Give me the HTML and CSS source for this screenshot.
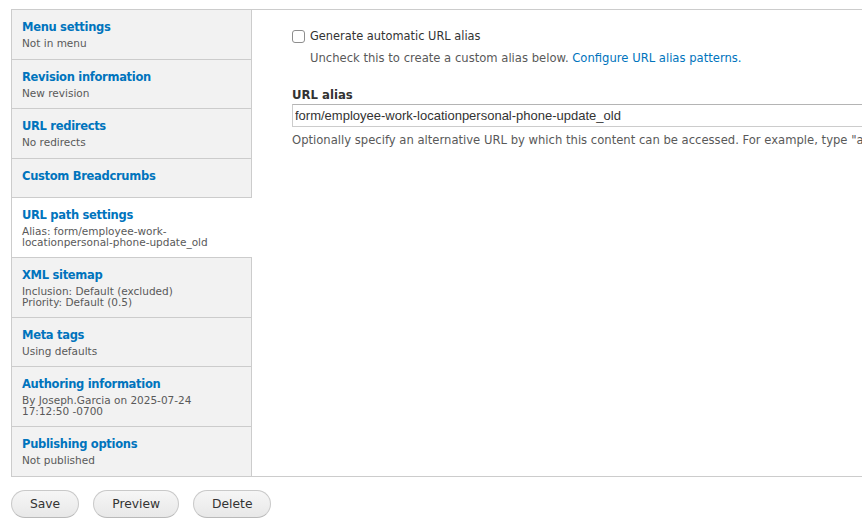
FILE: index.html
```html
<!DOCTYPE html>
<html lang="en">
<head>
<meta charset="utf-8">
<title>Edit</title>
<link rel="stylesheet" href="styles.css">
</head>
<body>
<div class="page">
  <div class="vtabs">
    <ul class="vt-menu">
      <li class="vt-item"><a class="vt-link" href="#"><strong class="vt-title">Menu settings</strong><span class="vt-summary">Not in menu</span></a></li>
      <li class="vt-item"><a class="vt-link" href="#"><strong class="vt-title">Revision information</strong><span class="vt-summary">New revision</span></a></li>
      <li class="vt-item"><a class="vt-link" href="#"><strong class="vt-title">URL redirects</strong><span class="vt-summary">No redirects</span></a></li>
      <li class="vt-item"><a class="vt-link vt-link-plain" href="#"><strong class="vt-title">Custom Breadcrumbs</strong></a></li>
      <li class="vt-item is-selected"><a class="vt-link vt-link-two" href="#"><strong class="vt-title">URL path settings</strong><span class="vt-summary">Alias: form/employee-work-<br>locationpersonal-phone-update_old</span></a></li>
      <li class="vt-item"><a class="vt-link vt-link-two" href="#"><strong class="vt-title">XML sitemap</strong><span class="vt-summary">Inclusion: Default (excluded)<br>Priority: Default (0.5)</span></a></li>
      <li class="vt-item"><a class="vt-link" href="#"><strong class="vt-title">Meta tags</strong><span class="vt-summary">Using defaults</span></a></li>
      <li class="vt-item"><a class="vt-link vt-link-two" href="#"><strong class="vt-title">Authoring information</strong><span class="vt-summary">By Joseph.Garcia on 2025-07-24<br>17:12:50 -0700</span></a></li>
      <li class="vt-item"><a class="vt-link" href="#"><strong class="vt-title">Publishing options</strong><span class="vt-summary">Not published</span></a></li>
    </ul>
    <div class="vt-pane">
      <div class="form-item form-checkbox">
        <label class="cb-label"><span class="cb"></span>Generate automatic URL alias</label>
        <div class="desc desc-indented">Uncheck this to create a custom alias below. <a class="link" href="#">Configure URL alias patterns.</a></div>
      </div>
      <div class="form-item form-text">
        <label class="field-label">URL alias</label>
        <input class="text-input" type="text" value="form/employee-work-locationpersonal-phone-update_old">
        <div class="desc desc-after">Optionally specify an alternative URL by which this content can be accessed. For example, type "about" when writing an about page.</div>
      </div>
    </div>
  </div>
  <div class="actions">
    <button class="btn" type="button">Save</button>
    <button class="btn" type="button">Preview</button>
    <button class="btn" type="button">Delete</button>
  </div>
</div>
</body>
</html>
```

FILE: styles.css
```css
html {
  overflow: hidden;
  background: #fff;
}
body {
  margin: 0;
  padding: 9px 0 0 11px;
  font-family: "DejaVu Sans", Verdana, sans-serif;
  color: #333;
}
.page {
  width: 1100px;
}
.vtabs {
  display: flex;
  border: 1px solid #ccc;
  border-right: none;
}
.vt-menu {
  list-style: none;
  margin: 0;
  padding: 0;
  width: 240px;
  flex: none;
  box-sizing: border-box;
  border-right: 1px solid #ccc;
  background: #f2f2f2;
}
.vt-item {
  border-bottom: 1px solid #ccc;
  background: #f2f2f2;
}
.vt-item:last-child {
  border-bottom: none;
}
.vt-item.is-selected {
  background: #fff;
  margin-right: -1px;
  position: relative;
}
.vt-link {
  display: block;
  padding: 8px 10px 9.6px 10px;
  text-decoration: none;
}
.vt-link-plain {
  padding-bottom: 12px;
}
.vt-link-two {
  padding-bottom: 9px;
}
.vt-title {
  display: block;
  font-size: 11.5px;
  letter-spacing: -0.3px;
  line-height: 18px;
  font-weight: bold;
  color: #0074bd;
}
.vt-summary {
  display: block;
  margin-top: 2px;
  font-size: 10.5px;
  line-height: 11px;
  color: #595959;
  white-space: nowrap;
}
.vt-pane {
  flex: 1;
  padding: 17px 0 0 40px;
}
.form-item {
  white-space: nowrap;
}
.cb-label {
  display: flex;
  align-items: center;
  font-size: 11.4px;
  line-height: 18px;
  color: #333;
}
.cb {
  width: 13px;
  height: 13px;
  box-sizing: border-box;
  border: 1px solid #8e8e8e;
  border-radius: 3px;
  background: #fff;
  margin-right: 5px;
  flex: none;
}
.desc {
  font-size: 11.6px;
  line-height: 18px;
  color: #595959;
}
.desc-indented {
  margin: 4px 0 0 18px;
}
.link {
  color: #0074bd;
  text-decoration: none;
}
.form-text {
  margin-top: 19px;
}
.field-label {
  display: block;
  font-size: 11.7px;
  line-height: 18px;
  font-weight: bold;
  color: #333;
}
.text-input {
  display: block;
  margin-top: 0;
  width: 720px;
  height: 23px;
  box-sizing: border-box;
  padding: 0 2px;
  border: 1px solid #ccc;
  border-top-color: #b4b4b4;
  border-radius: 0;
  font-family: "Liberation Sans", Arial, sans-serif;
  font-size: 13px;
  color: #333;
  background: #fff;
}
.desc-after {
  margin-top: 4px;
}
.actions {
  display: flex;
  gap: 14px;
  margin-top: 13px;
}
.btn {
  height: 28px;
  box-sizing: border-box;
  padding: 0 18px;
  border: 1px solid #c9c9c9;
  border-bottom-color: #b9b9b9;
  border-radius: 20em;
  background: linear-gradient(to bottom, #f6f6f6, #e8e8e8);
  font-family: "DejaVu Sans", Verdana, sans-serif;
  font-size: 12.3px;
  line-height: 26px;
  color: #333;
}
```
